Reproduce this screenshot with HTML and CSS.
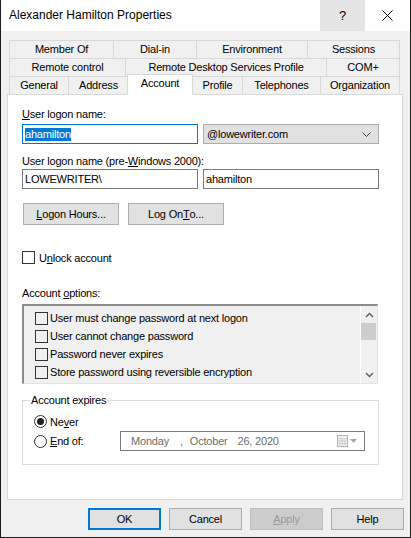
FILE: index.html
```html
<!DOCTYPE html>
<html>
<head>
<meta charset="utf-8">
<link rel="stylesheet" href="styles.css">
</head>
<body>
<div class="window">
  <div class="titlebar">
    <div class="title">Alexander Hamilton Properties</div>
    <div class="tb-btn help-btn">?</div>
    <div class="tb-btn close-btn">
      <svg width="11" height="11" viewBox="0 0 11 11"><path d="M0.5 0.5 L10.5 10.5 M10.5 0.5 L0.5 10.5" stroke="#000" stroke-width="1" fill="none"/></svg>
    </div>
  </div>

  <div class="tabs">
    <div class="tabrow row1">
      <div class="tab">Member Of</div>
      <div class="tab">Dial-in</div>
      <div class="tab">Environment</div>
      <div class="tab">Sessions</div>
    </div>
    <div class="tabrow row2">
      <div class="tab">Remote control</div>
      <div class="tab">Remote Desktop Services Profile</div>
      <div class="tab">COM+</div>
    </div>
    <div class="tabrow row3">
      <div class="tab">General</div>
      <div class="tab">Address</div>
      <div class="tab selected">Account</div>
      <div class="tab">Profile</div>
      <div class="tab">Telephones</div>
      <div class="tab">Organization</div>
    </div>
  </div>

  <div class="panel">
    <div class="field-label l1"><u>U</u>ser logon name:</div>
    <div class="inrow r1">
      <div class="input focused"><span class="sel">ahamilton</span></div>
      <div class="select">
        <span>@lowewriter.com</span>
        <svg width="9" height="5" viewBox="0 0 9 5"><path d="M0.5 0.5 L4.5 4.5 L8.5 0.5" stroke="#444" stroke-width="1" fill="none"/></svg>
      </div>
    </div>
    <div class="field-label l2">User logon name (pre-<u>W</u>indows 2000):</div>
    <div class="inrow r2">
      <div class="input">LOWEWRITER\</div>
      <div class="input">ahamilton</div>
    </div>
    <div class="btnrow">
      <div class="btn wide"><u>L</u>ogon Hours...</div>
      <div class="btn wide">Log On <u>T</u>o...</div>
    </div>
    <div class="check-row unlock">
      <span class="box"></span>
      <span>U<u>n</u>lock account</span>
    </div>
    <div class="field-label l3">Account <u>o</u>ptions:</div>
    <div class="list">
      <div class="list-items">
        <div class="list-row"><span class="box"></span><span>User must change password at next logon</span></div>
        <div class="list-row"><span class="box"></span><span>User cannot change password</span></div>
        <div class="list-row"><span class="box"></span><span>Password never expires</span></div>
        <div class="list-row"><span class="box"></span><span>Store password using reversible encryption</span></div>
      </div>
      <div class="scrollbar">
        <div class="sb-arrow">
          <svg width="9" height="6" viewBox="0 0 9 6"><path d="M1 5 L4.5 1.5 L8 5" stroke="#606060" stroke-width="1.5" fill="none"/></svg>
        </div>
        <div class="sb-thumb"></div>
        <div class="sb-track"></div>
        <div class="sb-arrow">
          <svg width="9" height="6" viewBox="0 0 9 6"><path d="M1 1 L4.5 4.5 L8 1" stroke="#606060" stroke-width="1.5" fill="none"/></svg>
        </div>
      </div>
    </div>
    <div class="group">
      <div class="group-label">Account expires</div>
      <div class="radio-row never">
        <span class="radio checked"></span>
        <span>Ne<u>v</u>er</span>
      </div>
      <div class="radio-row endof">
        <div class="radio-lbl">
          <span class="radio"></span>
          <span><u>E</u>nd of:</span>
        </div>
        <div class="datepicker">
          <span class="d-day">Monday</span>
          <span class="d-comma">,</span>
          <span class="d-month">October</span>
          <span class="d-date">26, 2020</span>
          <span class="d-icon">
            <svg width="11" height="12" viewBox="0 0 11 12">
              <rect x="0.5" y="0.5" width="10" height="11" fill="#f4f4f4" stroke="#b4b4b4"/>
              <path d="M0.5 3.5 H10.5 M0.5 6 H10.5 M0.5 8.5 H10.5 M3 3.5 V11.5 M5.5 3.5 V11.5 M8 3.5 V11.5" stroke="#cfcfcf" stroke-width="1" fill="none"/>
            </svg>
            <svg width="7" height="4" viewBox="0 0 7 4"><path d="M0 0 H7 L3.5 4 Z" fill="#a8a8a8"/></svg>
          </span>
        </div>
      </div>
    </div>
  </div>

  <div class="footer">
    <div class="btn default">OK</div>
    <div class="btn">Cancel</div>
    <div class="btn disabled"><u>A</u>pply</div>
    <div class="btn">Help</div>
  </div>
</div>
</body>
</html>
```

FILE: styles.css
```css
* { box-sizing: border-box; }

body {
  margin: 0;
  font-family: "Liberation Sans", Arial, sans-serif;
  font-size: 11px;
  letter-spacing: -0.2px;
  color: #000;
}

u { text-decoration: underline; text-underline-offset: 1px; }

.window {
  width: 411px;
  height: 538px;
  background: #f0f0f0;
  border: 1px solid #1c1c1c;
  border-top: 0;
  display: flex;
  flex-direction: column;
}

/* title bar */
.titlebar {
  flex: none;
  height: 31px;
  background: #fff;
  display: flex;
}
.title {
  flex: 1;
  padding-left: 8px;
  font-size: 12px;
  letter-spacing: 0;
  line-height: 31px;
}
.tb-btn {
  width: 45px;
  display: flex;
  align-items: center;
  justify-content: center;
}
.help-btn {
  background: #e5e5e5;
  font-size: 13px;
  letter-spacing: 0;
}

/* tabs */
.tabs {
  flex: none;
  margin: 9px 0 0 8px;
  width: 391px;
}
.tabrow {
  display: grid;
  height: 18px;
}
.row1 { grid-template-columns: 104px 83px 111px 93px; }
.row2 { grid-template-columns: 116px 201px 74px; }
.row3 { grid-template-columns: 59px 60px 64px 50px 78px 80px; }

.tab {
  background: #f0f0f0;
  border-top: 1px solid #d9d9d9;
  border-left: 1px solid #d9d9d9;
  text-align: center;
  line-height: 17px;
  white-space: nowrap;
}
.tab:last-child { border-right: 1px solid #d9d9d9; }
.tab.selected {
  position: relative;
  z-index: 1;
  background: #fff;
  margin: -2px -1px -1px -1px;
  border-right: 1px solid #d9d9d9;
}

/* panel */
.panel {
  flex: none;
  height: 406px;
  margin: 0 7px 0 6px;
  border: 1px solid #d9d9d9;
  background: #fff;
  padding: 0 0 0 14px;
}

.field-label { line-height: 13px; }
.l1 { margin-top: 13px; }
.l2 { margin-top: 11px; }
.l3 { margin-top: 23px; }

.inrow {
  display: flex;
  gap: 5px;
}
.r1 { margin-top: 3px; }
.r2 { margin-top: 1px; }

.input {
  width: 176px;
  height: 20px;
  border: 1px solid #7a7a7a;
  background: #fff;
  padding-left: 2px;
  display: flex;
  align-items: center;
  white-space: nowrap;
}
.input.focused { border-color: #0078d7; }
.sel {
  background: #0078d7;
  color: #fff;
  line-height: 13px;
}

.select {
  width: 176px;
  height: 20px;
  border: 1px solid #adadad;
  background: #e1e1e1;
  padding: 0 7px 0 3px;
  display: flex;
  align-items: center;
  justify-content: space-between;
}

.btn {
  width: 73px;
  height: 22px;
  background: #e1e1e1;
  border: 1px solid #adadad;
  display: flex;
  align-items: center;
  justify-content: center;
  white-space: nowrap;
}
.btn.default {
  border-color: #0078d7;
  box-shadow: inset 0 0 0 1px #0078d7;
}
.btn.disabled {
  background: #cccccc;
  border-color: #bfbfbf;
  color: #9a9a9a;
}

.btnrow {
  margin-top: 14px;
  padding-left: 1px;
  display: flex;
  gap: 9px;
}
.btn.wide { width: 96px; }

.box {
  width: 13px;
  height: 13px;
  border: 1px solid #333;
  flex: none;
}

.check-row {
  display: flex;
  align-items: center;
  gap: 4px;
  height: 13px;
}
.unlock { margin-top: 26px; }
.unlock .box { background: #fff; }

/* list */
.list {
  margin-top: 4px;
  width: 356px;
  height: 80px;
  background: #f0f0f0;
  border-top: 2px solid #8c8c8c;
  border-left: 2px solid #8c8c8c;
  border-right: 1px solid #e3e3e3;
  border-bottom: 1px solid #e3e3e3;
  display: flex;
}
.list-items {
  flex: 1;
  padding: 3px 0 0 11px;
}
.list-row {
  height: 18px;
  display: flex;
  align-items: center;
  gap: 2px;
  white-space: nowrap;
}
.scrollbar {
  width: 17px;
  border-left: 1px solid #fff;
  background: #f0f0f0;
  display: flex;
  flex-direction: column;
}
.sb-arrow {
  height: 17px;
  display: flex;
  align-items: center;
  justify-content: center;
}
.sb-thumb {
  height: 17px;
  margin: 0 1px 0 0;
  background: #cdcdcd;
}
.sb-track { flex: 1; }

/* group */
.group {
  position: relative;
  margin-top: 16px;
  width: 357px;
  height: 65px;
  border: 1px solid #dcdcdc;
  padding-left: 11px;
}
.group-label {
  position: absolute;
  top: -7px;
  left: 7px;
  padding: 0 1px;
  background: #fff;
  line-height: 13px;
}
.radio-row {
  display: flex;
  align-items: center;
}
.never {
  margin-top: 14px;
  height: 13px;
  gap: 3px;
}
.endof {
  margin-top: 3px;
  height: 20px;
}
.radio-lbl {
  width: 86px;
  display: flex;
  align-items: center;
  gap: 3px;
}
.radio {
  width: 13px;
  height: 13px;
  border: 1px solid #333;
  border-radius: 50%;
  background: #fff;
  flex: none;
  display: flex;
  align-items: center;
  justify-content: center;
}
.radio.checked::after {
  content: "";
  width: 7px;
  height: 7px;
  border-radius: 50%;
  background: #222;
}

.datepicker {
  width: 245px;
  height: 20px;
  border: 1px solid #7a7a7a;
  background: #fff;
  color: #6d6d6d;
  display: flex;
  align-items: center;
  padding: 0 7px 0 10px;
  white-space: nowrap;
}
.d-comma { margin-left: 11px; }
.d-month { margin-left: 7px; }
.d-date { margin-left: 10px; }
.d-icon {
  margin-left: auto;
  display: flex;
  align-items: center;
  gap: 2px;
}

/* footer */
.footer {
  flex: none;
  margin-top: 8px;
  padding-right: 6px;
  display: flex;
  justify-content: flex-end;
  gap: 8px;
}
```
